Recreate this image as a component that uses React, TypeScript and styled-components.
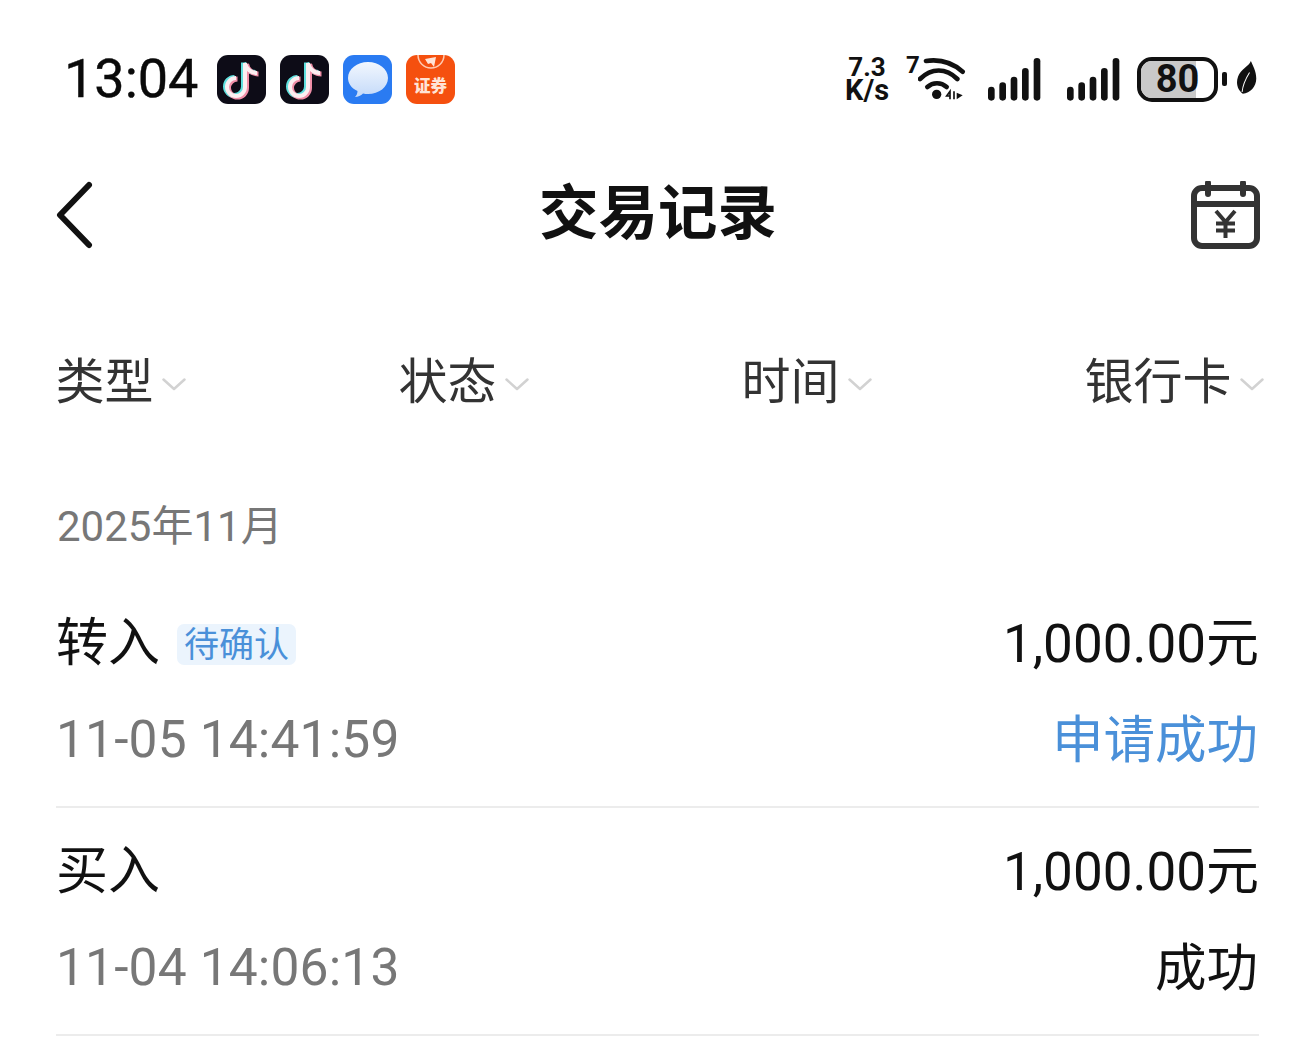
import React from "react";
import styled, { createGlobalStyle } from "styled-components";

const GlobalStyle = createGlobalStyle`
  html, body {
    margin: 0;
    padding: 0;
    background: #fff;
    font-family: Roboto, "Noto Sans CJK SC", sans-serif;
  }
`;

const Page = styled.div`
  width: 1316px;
  height: 1038px;
  overflow: hidden;
  background: #fff;
  color: #111;
`;

const StatusBar = styled.div`
  display: flex;
  justify-content: space-between;
  align-items: center;
  height: 56px;
  margin-top: 51px;
  padding: 0 59px 0 64px;
`;

const StatusLeft = styled.div`
  display: flex;
  align-items: center;
`;

const Clock = styled.div`
  font-size: 54px;
  line-height: 56px;
  width: 153px;
  color: #0a0a0a;
  -webkit-text-stroke: 0.4px #0a0a0a;
`;

const AppIcons = styled.div`
  display: flex;
  gap: 14px;
`;

const AppIcon = styled.div<{ $bg: string }>`
  position: relative;
  width: 49px;
  height: 49px;
  border-radius: 11px;
  background: ${(p) => p.$bg};
  overflow: hidden;
  svg {
    display: block;
  }
`;

const BrokerLabel = styled.span`
  position: absolute;
  left: 0;
  right: 0;
  top: 20px;
  text-align: center;
  font-family: "Noto Sans CJK SC", sans-serif;
  font-size: 16.5px;
  line-height: 20px;
  font-weight: 900;
  color: #ffe3d6;
`;

const StatusRight = styled.div`
  display: flex;
  align-items: center;
`;

const NetSpeed = styled.div`
  width: 44px;
  margin-right: 17px;
  font-size: 26px;
  line-height: 23px;
  font-weight: 700;
  text-align: center;
  color: #111;
`;

const NetUnit = styled.div`
  font-size: 29px;
`;

const WifiSlot = styled.div`
  position: relative;
  width: 60px;
  height: 50px;
  margin-right: 22px;
`;

const WifiSeven = styled.span`
  position: absolute;
  left: 0;
  top: -2px;
  font-size: 24px;
  line-height: 26px;
  font-weight: 700;
`;

const WifiGlyph = styled.svg`
  position: absolute;
  left: 12px;
  top: 4px;
`;

const SignalGroup = styled.div`
  display: flex;
  gap: 26px;
  margin-right: 17px;
  svg {
    display: block;
  }
`;

const Battery = styled.div`
  position: relative;
  box-sizing: border-box;
  width: 81px;
  height: 45px;
  border: 4px solid #111;
  border-radius: 15px;
  overflow: hidden;
  display: flex;
  align-items: center;
`;

const BatteryFill = styled.div<{ $level: number }>`
  position: absolute;
  left: 0;
  top: 0;
  bottom: 0;
  width: ${(p) => p.$level}%;
  background: #c9c9c9;
`;

const BatteryText = styled.span`
  position: relative;
  width: 100%;
  text-align: center;
  font-size: 38px;
  line-height: 37px;
  font-weight: 700;
`;

const BatteryNub = styled.div`
  width: 5px;
  height: 14px;
  margin: 0 9px 0 4px;
  border-radius: 2px;
  background: #111;
`;

const LeafGlyph = styled.svg`
  display: block;
  margin-bottom: 3px;
`;

const NavBar = styled.div`
  display: grid;
  grid-template-columns: 1fr auto 1fr;
  align-items: center;
  height: 132px;
  margin-top: 42px;
  padding: 0 56px;
`;

const NavTitle = styled.div`
  margin-bottom: 14px;
  font-family: "Noto Sans CJK SC", sans-serif;
  font-size: 59.5px;
  line-height: 70px;
  font-weight: 700;
  color: #111;
`;

const NavRight = styled.div`
  justify-self: end;
`;

const FilterBar = styled.div`
  display: grid;
  grid-template-columns: repeat(4, 343px);
  align-items: center;
  height: 100px;
  margin-top: 50px;
  padding-left: 55.5px;
`;

const FilterItem = styled.div`
  display: flex;
  align-items: center;
  gap: 8px;
  margin-bottom: 6px;
  font-family: "Noto Sans CJK SC", sans-serif;
  font-size: 49px;
  line-height: 60px;
  color: #333;
  svg {
    margin-top: 12px;
  }
`;

const MonthLabel = styled.div`
  height: 60px;
  margin-top: 66px;
  padding-left: 57px;
  font-size: 42px;
  line-height: 60px;
  color: #777;
`;

const RecordList = styled.div`
  margin: 23px 57px 0 56px;
`;

const Record = styled.div`
  box-sizing: border-box;
  height: 228px;
  padding-top: 15px;
  border-bottom: 2px solid #ececec;
`;

const RecordLine = styled.div`
  display: flex;
  justify-content: space-between;
  align-items: center;
  height: 96px;
`;

const RecordTitle = styled.div`
  display: flex;
  align-items: center;
  gap: 17px;
  margin-bottom: 9px;
  font-family: "Noto Sans CJK SC", sans-serif;
  font-size: 52px;
  color: #111;
`;

const Tag = styled.span`
  margin-top: 11px;
  padding: 0 7px;
  height: 41px;
  line-height: 36px;
  border-radius: 7px;
  background: #ebf4fd;
  color: #4a90d9;
  font-size: 35px;
`;

const Amount = styled.div`
  margin-bottom: 8px;
  font-size: 53px;
  color: #111;
`;

const RecordTime = styled.div`
  font-size: 51.5px;
  letter-spacing: 0.15px;
  color: #777;
`;

const RecordStatus = styled.div<{ $tone: "pending" | "done" }>`
  margin: 0 1px 8px 0;
  font-family: "Noto Sans CJK SC", sans-serif;
  font-size: 51.5px;
  color: ${(p) => (p.$tone === "pending" ? "#4a90d9" : "#111")};
`;

const NOTE_PATH = "M28 8v24a9 9 0 1 1-9-9M28 8c1 6 6 10 12 10";

const TiktokIcon = () => (
  <AppIcon $bg="#0d0c17">
    <svg width="49" height="49" viewBox="0 0 49 49" fill="none" strokeWidth="5">
      <path d={NOTE_PATH} stroke="#5fe0de" transform="translate(-1.5 -0.5)" />
      <path d={NOTE_PATH} stroke="#f08fa8" transform="translate(1.5 1)" />
      <path d={NOTE_PATH} stroke="#fbeff1" strokeWidth="4" />
    </svg>
  </AppIcon>
);

const MessageIcon = () => (
  <AppIcon $bg="#2a7bf2">
    <svg width="49" height="49" viewBox="0 0 49 49">
      <defs>
        <linearGradient id="bubble" x1="0" y1="0" x2="0" y2="1">
          <stop offset="0" stopColor="#f2f7fe" />
          <stop offset="1" stopColor="#c4daf9" />
        </linearGradient>
      </defs>
      <path
        d="M25 7c11 0 20 7 20 16s-9 16-20 16c-2 0-3 0-5-.5-2 2-5 3.500-8 3.500 1.500-1.500 2.500-3.500 2.500-6C8 33 5 28 5 23 5 14 14 7 25 7z"
        fill="url(#bubble)"
      />
    </svg>
  </AppIcon>
);

const BrokerIcon = () => (
  <AppIcon $bg="#f5500f">
    <svg width="49" height="49" viewBox="0 0 49 49" fill="none">
      <circle cx="25" cy="0" r="13" stroke="#ffc9b0" strokeWidth="1.500" />
      <path d="M19 4l11-2-2 10-3-4-3 1z" fill="#ffe3d6" />
    </svg>
    <BrokerLabel>证券</BrokerLabel>
  </AppIcon>
);

const Signal = () => (
  <svg width="53" height="43" viewBox="0 0 159 129" fill="#111">
    <rect x="0" y="86" width="20" height="42" rx="10" />
    <rect x="34" y="73" width="20" height="55" rx="10" />
    <rect x="68" y="56" width="20" height="72" rx="10" />
    <rect x="102" y="30" width="20" height="98" rx="10" />
    <rect x="137" y="0" width="20" height="128" rx="10" />
  </svg>
);

const WifiIcon = () => (
  <WifiSlot>
    <WifiSeven>7</WifiSeven>
    <WifiGlyph width="48" height="44" viewBox="0 0 144 132" fill="none" stroke="#111" strokeWidth="14" strokeLinecap="round">
      <path d="M24 9c40-6 78 4 110 32" />
      <path d="M6 63c34-34 78-34 112 0" />
      <path d="M28 87c17-15 41-15 58 0" />
      <circle cx="56" cy="109" r="14" fill="#111" stroke="none" />
      <path d="M96 114l-10 0 10-14v24M108 100v24" strokeWidth="5" strokeLinecap="butt" />
      <path d="M116 104l18 8-18 12z" fill="#111" stroke="none" />
    </WifiGlyph>
  </WifiSlot>
);

const LeafIcon = () => (
  <LeafGlyph width="21" height="33" viewBox="0 0 62 98">
    <path d="M44 0C38 16 14 24 6 46-2 68 6 88 20 97 42 96 60 76 60 52 60 30 50 14 44 0z" fill="#111" />
    <path d="M18 92C20 70 30 50 40 34" stroke="#fff" strokeWidth="3" fill="none" />
  </LeafGlyph>
);

const BackIcon = () => (
  <svg width="38" height="68" viewBox="0 0 38 68" fill="none" stroke="#111" strokeWidth="6" strokeLinecap="round" strokeLinejoin="round">
    <path d="M33 4L4 34l29 30" />
  </svg>
);

const CalendarIcon = () => (
  <svg width="69" height="68" viewBox="0 0 69 68" fill="none" stroke="#333" strokeWidth="6" strokeLinecap="round" strokeLinejoin="round" style={{ display: "block" }}>
    <rect x="3" y="7" width="63" height="58" rx="8" />
    <path d="M3 23h63M17 2v11M52 2v11" />
    <path d="M25 30l9.500 11L44 30M34.500 41v16M25 42.500h19M25 49.500h19" strokeWidth="4" strokeLinecap="butt" />
  </svg>
);

const Caret = () => (
  <svg width="24" height="13" viewBox="0 0 24 13" fill="none" stroke="#d2d2d2" strokeWidth="2.500" strokeLinecap="round" strokeLinejoin="round">
    <path d="M1.500 1.500L12 11 22.500 1.500" />
  </svg>
);

const filters = ["类型", "状态", "时间", "银行卡"];

const records = [
  { title: "转入", tag: "待确认", amount: "1,000.00元", time: "11-05 14:41:59", status: "申请成功", tone: "pending" as const },
  { title: "买入", amount: "1,000.00元", time: "11-04 14:06:13", status: "成功", tone: "done" as const },
];

export default function App() {
  return (
    <Page>
      <GlobalStyle />
      <StatusBar>
        <StatusLeft>
          <Clock>13:04</Clock>
          <AppIcons>
            <TiktokIcon />
            <TiktokIcon />
            <MessageIcon />
            <BrokerIcon />
          </AppIcons>
        </StatusLeft>
        <StatusRight>
          <NetSpeed>
            7.3
            <NetUnit>K/s</NetUnit>
          </NetSpeed>
          <WifiIcon />
          <SignalGroup>
            <Signal />
            <Signal />
          </SignalGroup>
          <Battery>
            <BatteryFill $level={76} />
            <BatteryText>80</BatteryText>
          </Battery>
          <BatteryNub />
          <LeafIcon />
        </StatusRight>
      </StatusBar>

      <NavBar>
        <BackIcon />
        <NavTitle>交易记录</NavTitle>
        <NavRight>
          <CalendarIcon />
        </NavRight>
      </NavBar>

      <FilterBar>
        {filters.map((name) => (
          <FilterItem key={name}>
            {name}
            <Caret />
          </FilterItem>
        ))}
      </FilterBar>

      <MonthLabel>2025年11月</MonthLabel>

      <RecordList>
        {records.map((r) => (
          <Record key={r.time}>
            <RecordLine>
              <RecordTitle>
                {r.title}
                {r.tag && <Tag>{r.tag}</Tag>}
              </RecordTitle>
              <Amount>{r.amount}</Amount>
            </RecordLine>
            <RecordLine>
              <RecordTime>{r.time}</RecordTime>
              <RecordStatus $tone={r.tone}>{r.status}</RecordStatus>
            </RecordLine>
          </Record>
        ))}
      </RecordList>
    </Page>
  );
}
